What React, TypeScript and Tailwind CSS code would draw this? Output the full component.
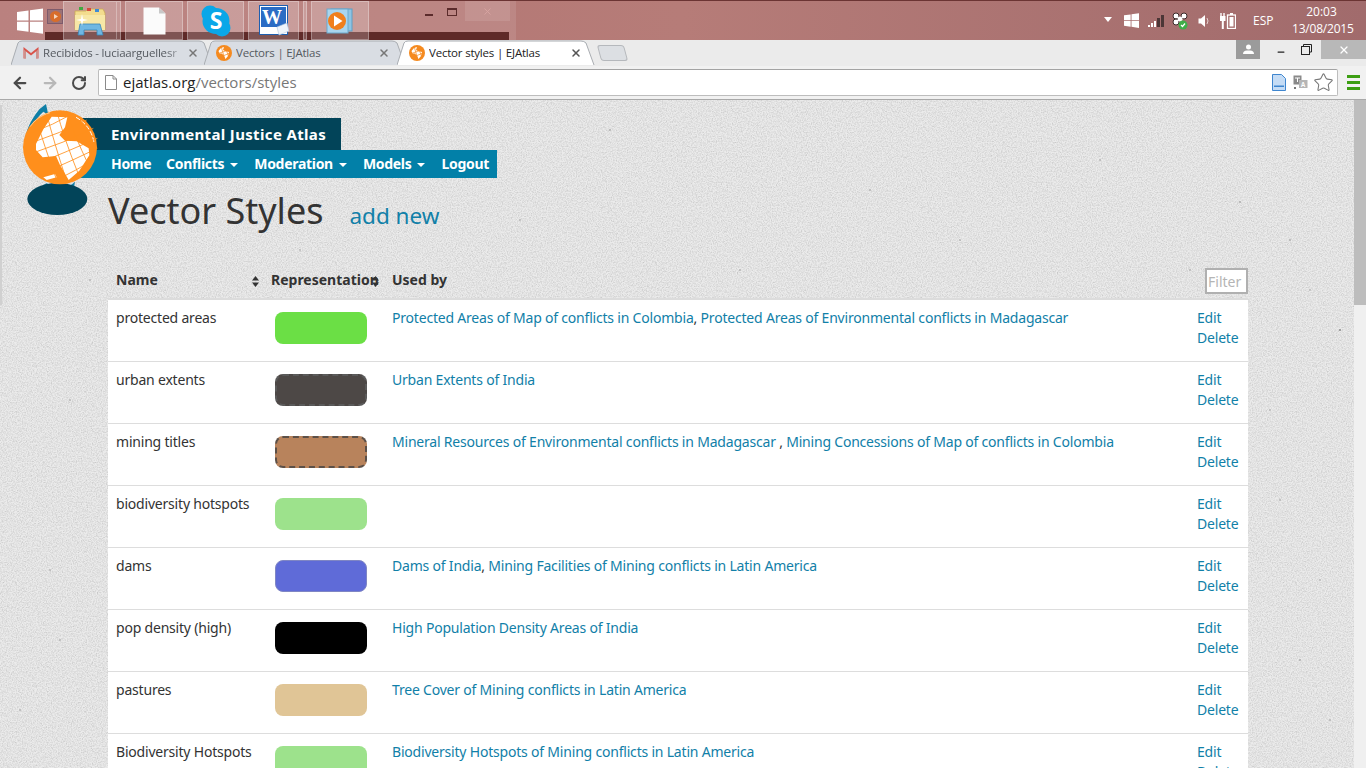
import React from 'react';
import { ArrowLeft, ArrowRight, RotateCw, Star, X, Minus } from 'lucide-react';

const rows = [
  { name: 'protected areas', swatch: 'bg-[#6bdf45]', links: ['Protected Areas of Map of conflicts in Colombia', ', ', 'Protected Areas of Environmental conflicts in Madagascar'] },
  { name: 'urban extents', swatch: 'bg-[#4d4846] border-2 border-dashed border-[#5a5a5a]', links: ['Urban Extents of India'] },
  { name: 'mining titles', swatch: 'bg-[#b8835c] border-2 border-dashed border-[#5c5048]', links: ['Mineral Resources of Environmental conflicts in Madagascar', ' , ', 'Mining Concessions of Map of conflicts in Colombia'] },
  { name: 'biodiversity hotspots', swatch: 'bg-[#9de28c]', links: [] },
  { name: 'dams', swatch: 'bg-[#5f6bd8] border border-[#7f86c4]', links: ['Dams of India', ', ', 'Mining Facilities of Mining conflicts in Latin America'] },
  { name: 'pop density (high)', swatch: 'bg-black', links: ['High Population Density Areas of India'] },
  { name: 'pastures', swatch: 'bg-[#e0c596]', links: ['Tree Cover of Mining conflicts in Latin America'] },
  { name: 'Biodiversity Hotspots', swatch: 'bg-[#9de28c]', links: ['Biodiversity Hotspots of Mining conflicts in Latin America'] },
];

const specks = [
  [160, 40, 0.8], [420, 70, 0.7], [610, 30, 0.8], [870, 90, 0.7], [1100, 60, 0.7], [1290, 140, 0.8], [1340, 230, 1], [1310, 190, 0.7],
  [300, 150, 0.7], [520, 120, 0.7], [740, 170, 0.7], [960, 140, 0.7], [1240, 102, 0.8], [70, 300, 0.7], [50, 470, 0.7], [1280, 400, 0.7],
  [1300, 560, 0.8], [1330, 620, 0.7], [20, 610, 0.7], [60, 540, 0.7], [1270, 310, 0.7], [90, 180, 0.7], [1190, 170, 0.7], [1320, 480, 0.7],
];

const WindowsLogo = ({ size = 26, color = 'white' }: { size?: number; color?: string }) => (
  <svg width={size} height={size} viewBox="0 0 26 26" fill={color}>
    <path d="M0 4 L11.5 2.4 V12.4 H0 Z M13 2.2 L26 0.4 V12.4 H13 Z M0 13.8 H11.5 V23.8 L0 22.2 Z M13 13.8 H26 V25.8 L13 24 Z" />
  </svg>
);

const MiniGlobe = () => (
  <svg width="16" height="16" viewBox="0 0 16 16" className="shrink-0">
    <circle cx="8" cy="8" r="8" fill="#f58a1f" />
    <path d="M2.5 6 L5 3 L8 2 L7 5 L9 6 L13 7 L12 11 L9.5 14 L8 11 L6 8.5 L3.5 8.5 Z" fill="white" />
    <path d="M1 9 L15 4 M2 13 L14 8 M5 1 L9 15 M9 1 L13 13" stroke="#f58a1f" strokeWidth="0.7" />
  </svg>
);

const GmailIcon = () => (
  <svg width="16" height="13" viewBox="0 0 16 13" className="shrink-0">
    <path d="M0.5 12.5 V1 L8 7 L15.5 1 V12.5 H13 V5.5 L8 9.5 L3 5.5 V12.5 Z" fill="#d9534a" />
    <path d="M3 12.5 V5.5 L1 3.5 V12.5 Z M13 12.5 V5.5 L15 3.5 V12.5 Z" fill="#c5c5c5" opacity="0.55" />
  </svg>
);

const FolderIcon = () => (
  <svg width="32" height="30" viewBox="0 0 32 30">
    <path d="M1 5 H12 L14 3 H29 L31 7 V24 H1 Z" fill="#f3dc8e" stroke="#c9aa56" strokeWidth="0.8" />
    <rect x="5" y="1" width="4" height="3" fill="#3faa3f" />
    <rect x="13" y="2" width="4" height="3" fill="#d6493c" />
    <rect x="21" y="3" width="4" height="3" fill="#3d8bd6" />
    <path d="M1 9 H31 V24 H1 Z" fill="#f7e7a6" />
    <path d="M6 18 H26 L29 29 H23 V24 H10 V29 H4 Z" fill="#6fb7e3" stroke="#3b85b8" strokeWidth="0.8" />
    <path d="M8 8 L9 13 L14 14 L9 15 L8 20 L7 15 L2 14 L7 13 Z" fill="white" />
  </svg>
);

const FileIcon = () => (
  <svg width="23" height="28" viewBox="0 0 23 28">
    <path d="M0.5 0.5 H16 L22.5 6.5 V27.5 H0.5 Z" fill="#fbfbfb" />
    <path d="M16 0.5 V6.5 H22.5 Z" fill="#c8c8c8" />
  </svg>
);

const SkypeIcon = () => (
  <svg width="30" height="32" viewBox="0 0 30 32">
    <circle cx="9" cy="9" r="8.5" fill="#0aa7e8" />
    <circle cx="21" cy="23" r="8.5" fill="#0aa7e8" />
    <ellipse cx="15" cy="16" rx="13.5" ry="13" fill="#0aa7e8" />
    <text x="15" y="24" textAnchor="middle" fontFamily="Open Sans" fontWeight="700" fontSize="23" fill="white">S</text>
  </svg>
);

const WordIcon = () => (
  <svg width="30" height="31" viewBox="0 0 30 31">
    <rect x="0.5" y="0.5" width="28" height="29" fill="#ffffff" stroke="#1e5fb0" />
    <rect x="2" y="2" width="25" height="20" fill="#2b6cc4" />
    <text x="13" y="19" textAnchor="middle" fontFamily="Liberation Serif" fontWeight="700" fontSize="20" fill="white">W</text>
    <path d="M18 22 L28 18 L30 26 L20 30 Z" fill="#eef4fb" stroke="#aec4de" strokeWidth="0.6" />
  </svg>
);

const MediaIcon = () => (
  <svg width="28" height="26" viewBox="0 0 28 26">
    <rect x="5" y="1" width="21" height="22" fill="#8fc4e3" stroke="#5d9fc6" />
    <rect x="1" y="1" width="21" height="24" fill="#a9d5ee" stroke="#6aa9cd" />
    <circle cx="11" cy="13" r="9" fill="#f07f1c" />
    <path d="M8 7.5 L16.5 13 L8 18.5 Z" fill="white" />
  </svg>
);

const TaskButton = ({ className, children }: { className: string; children?: React.ReactNode }) => (
  <div className={`h-[39px] border border-white/30 bg-white/20 flex items-center justify-center shrink-0 ${className}`}>
    {children}
  </div>
);

const Taskbar = () => (
  <div className="relative h-10 shrink-0 flex items-center bg-gradient-to-r from-[#b27371] via-[#b67c78] to-[#a16b6c] border-t border-[#6b3433]">
    <div className="absolute left-0 top-0 h-full w-[516px] bg-white/10" />
    <div className="absolute left-[45px] top-[31px] h-[9px] w-[464px] bg-[#5f2a28]" />
    <div className="relative flex items-center h-full w-full">
      <div className="ml-[17px] w-[30px] shrink-0">
        <WindowsLogo />
      </div>
      <div className="w-[16px] h-[15px] -mt-2 border border-[#7d5b6c] bg-[#9c7276] flex items-center justify-center shrink-0">
        <svg width="11" height="11" viewBox="0 0 11 11">
          <circle cx="5.5" cy="5.5" r="5.5" fill="#d86d2a" />
          <path d="M4 3 L8 5.5 L4 8 Z" fill="#f3d5bd" />
        </svg>
      </div>
      <TaskButton className="w-[54px]">
        <FolderIcon />
      </TaskButton>
      <TaskButton className="w-[4px] border-l-0" />
      <div className="w-[4px]" />
      <TaskButton className="w-[58px]">
        <FileIcon />
      </TaskButton>
      <div className="w-[4px]" />
      <TaskButton className="w-[57px]">
        <SkypeIcon />
      </TaskButton>
      <div className="w-[4px]" />
      <TaskButton className="w-[51px]">
        <WordIcon />
      </TaskButton>
      <div className="w-[4px]" />
      <TaskButton className="w-[4px]" />
      <div className="w-[4px]" />
      <TaskButton className="w-[58px]">
        <MediaIcon />
      </TaskButton>
      <div className="ml-[56px] self-start mt-[13px] w-[8px] h-[2px] bg-[#5b2b2b] shrink-0" />
      <div className="ml-[14px] self-start mt-[7px] w-[10px] h-[8px] border border-[#5b2b2b] border-t-2 shrink-0" />
      <div className="ml-[8px] self-start h-[20px] w-[45px] bg-white/10 flex items-center justify-center shrink-0">
        <X size={11} className="text-[#d8a4a2]" />
      </div>
      <div className="ml-auto flex items-center h-full text-white [font-family:'Open_Sans',sans-serif]">
        <div className="mt-[-2px] w-0 h-0 border-l-[4px] border-r-[4px] border-t-[5px] border-l-transparent border-r-transparent border-t-white" />
        <div className="ml-[12px]">
          <WindowsLogo size={15} />
        </div>
        <svg className="ml-[9px]" width="16" height="14" viewBox="0 0 16 14" fill="#4c3636">
          <rect x="0" y="11" width="2" height="2" fill="white" />
          <rect x="3" y="9" width="2" height="4" fill="white" />
          <rect x="6" y="7" width="2" height="6" fill="white" />
          <rect x="9" y="4" width="3" height="9" />
          <rect x="13" y="1" width="3" height="12" />
        </svg>
        <svg className="ml-[8px]" width="16" height="18" viewBox="0 0 16 18">
          <circle cx="4" cy="4" r="3" fill="white" stroke="#3b2a2a" />
          <circle cx="12" cy="4" r="3" fill="white" stroke="#3b2a2a" />
          <circle cx="4" cy="10" r="3" fill="white" stroke="#3b2a2a" />
          <circle cx="8" cy="7" r="2.5" fill="white" />
          <circle cx="11" cy="13" r="4.5" fill="#3fae49" />
          <path d="M9 13 L10.5 14.5 L13 11.5" stroke="white" strokeWidth="1.2" fill="none" />
        </svg>
        <svg className="ml-[10px]" width="12" height="14" viewBox="0 0 12 14">
          <path d="M0.5 4.5 H3 L7 1 V13 L3 9.5 H0.5 Z" fill="white" />
          <path d="M9 4 Q11 7 9 10" stroke="#e7d2d2" fill="none" />
        </svg>
        <svg className="ml-[10px]" width="16" height="16" viewBox="0 0 16 16">
          <path d="M1 0 V3 M4 0 V3" stroke="white" strokeWidth="1.4" />
          <rect x="0" y="3" width="5.5" height="5" fill="white" />
          <rect x="1.8" y="8" width="2" height="8" fill="white" />
          <rect x="7.5" y="2" width="8" height="13.5" fill="none" stroke="white" strokeWidth="1.3" />
          <rect x="10" y="0" width="3" height="2" fill="white" />
          <rect x="9.5" y="4" width="4" height="9.5" fill="white" />
        </svg>
        <span className="ml-[17px] text-[12px] w-[20px]">ESP</span>
        <div className="ml-[19px] mr-[15px] w-[59px] text-center text-[12px] leading-[17px] -mt-[1px]">
          <div>20:03</div>
          <div className="tracking-[-0.2px]">13/08/2015</div>
        </div>
      </div>
    </div>
  </div>
);

const Tab = ({ title, icon, active, width, closeGap, fade }: { title: string; icon: React.ReactNode; active?: boolean; width: number; closeGap: number; fade?: boolean }) => (
  <div className="relative h-[26px] shrink-0" style={{ width }}>
    <svg className="absolute inset-0" width={width} height={26} viewBox={`0 0 ${width} 26`}>
      <path
        d={`M0 25 L7 3 Q8 1 11 1 H${width - 14} Q${width - 11} 1 ${width - 9} 3 L${width - 1} 25`}
        fill={active ? '#ffffff' : '#d9dde3'}
        stroke="#a9adb2"
      />
    </svg>
    <div className="relative flex items-center h-full pl-[12px] pb-[1px]" style={{ paddingRight: closeGap }}>
      {icon}
      <span
        className={`ml-[4px] flex-1 overflow-hidden whitespace-nowrap text-[11.5px] tracking-[-0.2px] ${active ? 'text-[#222222]' : 'text-[#555a60]'} ${fade ? '[mask-image:linear-gradient(to_right,black_85%,transparent)]' : ''}`}
      >
        {title}
      </span>
      <X size={12} strokeWidth={3} className={active ? 'text-[#555555]' : 'text-[#777777]'} />
    </div>
  </div>
);

const BrowserChrome = () => (
  <div className="shrink-0 bg-[#ededed] border-b border-[#a9a9a9] [font-family:'Open_Sans',sans-serif]">
    <div className="relative h-[26px] flex items-start pl-[11px] bg-[#ebebeb]">
      <div className="flex">
        <Tab title="Recibidos - luciaarguellesr" icon={<GmailIcon />} width={202} closeGap={14} fade />
        <div className="-ml-[9px]">
          <Tab title="Vectors | EJAtlas" icon={<MiniGlobe />} width={202} closeGap={16} />
        </div>
        <div className="-ml-[9px]">
          <Tab title="Vector styles | EJAtlas" icon={<MiniGlobe />} active width={198} closeGap={13} />
        </div>
      </div>
      <div className="mt-[5px] ml-[4px] w-[27px] h-[16px] rounded-[3px] skew-x-[15deg] border border-[#b5b8bc] bg-[#dcdfe3]" />
      <div className="ml-auto flex items-start h-[19px]">
        <div className="w-[24px] h-[19px] bg-[#9b9b9b] flex items-center justify-center">
          <svg width="11" height="11" viewBox="0 0 11 11" fill="white">
            <circle cx="5.5" cy="3" r="2.5" />
            <path d="M0 10 Q0 6.5 4 6.5 H7 Q11 6.5 11 10 Z" />
          </svg>
        </div>
        <div className="w-[16px]" />
        <Minus size={10} strokeWidth={3} className="mt-[7px] text-[#222222]" />
        <div className="w-[15px]" />
        <svg className="mt-[4px]" width="11" height="11" viewBox="0 0 11 11" fill="none" stroke="#222222">
          <rect x="0.5" y="2.5" width="8" height="8" />
          <path d="M2.5 2.5 V0.5 H10.5 V8 H8.5" />
        </svg>
        <div className="w-[9px]" />
        <div className="w-[45px] h-[19px] bg-[#b8b8b8] flex items-center justify-center">
          <X size={12} strokeWidth={2.5} className="text-white" />
        </div>
      </div>
    </div>
    <div className="h-[33px] flex items-center bg-[#f1f1f1]">
      <ArrowLeft size={18} strokeWidth={3} className="ml-[11px] text-[#4a4a4a]" />
      <ArrowRight size={18} strokeWidth={3} className="ml-[12px] text-[#b8b8b8]" />
      <RotateCw size={16} strokeWidth={3} className="ml-[12px] text-[#4a4a4a]" />
      <div className="ml-[11px] w-[1240px] h-[27px] bg-white border border-[#bdbdbd] border-t-[#a3a3a3] rounded-[2px] flex items-center">
        <svg className="ml-[6px]" width="12" height="15" viewBox="0 0 12 15" fill="none" stroke="#8a8a8a">
          <path d="M0.5 0.5 H8 L11.5 4 V14.5 H0.5 Z M8 0.5 V4 H11.5" />
        </svg>
        <span className="ml-[6px] text-[15px] text-[#222222]">
          ejatlas.org<span className="text-[#777777]">/vectors/styles</span>
        </span>
        <svg className="ml-auto" width="14" height="17" viewBox="0 0 14 17">
          <path d="M0.5 0.5 H9.5 L13.5 4.5 V16.5 H0.5 Z" fill="#c5dcf5" stroke="#3f86cf" />
          <rect x="2" y="11.5" width="10" height="1.5" fill="#3f86cf" />
        </svg>
        <svg className="ml-[7px]" width="15" height="15" viewBox="0 0 15 15">
          <rect x="0.5" y="0.5" width="8" height="9" fill="#8a8a8a" />
          <rect x="6" y="5" width="8.5" height="8" fill="#b5b5b5" />
          <text x="10.2" y="12" textAnchor="middle" fontSize="6.5" fontFamily="Liberation Sans" fontWeight="700" fill="white">A</text>
          <path d="M2 3 H7 M4.5 3 V7" stroke="white" />
          <path d="M1 12 L3 14 M3 12 L1 14" stroke="#777777" />
        </svg>
        <Star size={21} strokeWidth={1.2} className="ml-[5px] mr-[3px] text-[#777777]" />
      </div>
      <div className="ml-[9px] w-[13px] flex flex-col gap-[3px]">
        <div className="h-[3px] bg-[#3c9e12]" />
        <div className="h-[3px] bg-[#3c9e12]" />
        <div className="h-[3px] bg-[#3c9e12]" />
      </div>
    </div>
  </div>
);

const Globe = () => (
  <svg className="absolute left-[22px] top-[3px]" width="80" height="114" viewBox="36 9 240 342">
    <path d="M108 12 L115 45 L100 35 Q55 75 45 150 Q38 90 88 28 Z" fill="#0f7fa6" />
    <path d="M110 250 Q160 280 195 245 L190 272 Q140 285 100 255 Z" fill="#0f7fa6" />
    <ellipse cx="142" cy="297" rx="90" ry="48" fill="#024459" />
    <circle cx="150" cy="142" r="111" fill="#ff8f1c" />
    <path d="M60 80 A108 108 0 0 1 120 38" stroke="#ffffff" strokeWidth="1.5" fill="none" />
    <path d="M198 52 A104 104 0 0 1 252 128" stroke="#ffffff" strokeWidth="3" strokeDasharray="14 6" fill="none" />
    <path d="M100 232 L135 222 L140 232 L110 240 Z" fill="#ffffff" />
    <path
      d="M78 132 L100 88 L125 50 L172 52 L165 82 L148 105 L165 122 L200 124 L236 145 L238 166 L208 212 L176 240 L150 195 L138 168 L98 172 L78 150 Z"
      fill="#ffffff"
    />
    <g stroke="#ff8f1c" strokeWidth="2.5" fill="none">
      <path d="M60 100 Q130 75 190 40" />
      <path d="M60 130 Q150 100 230 60" />
      <path d="M66 160 Q160 130 250 85" />
      <path d="M85 190 Q170 155 262 115" />
      <path d="M110 215 Q190 180 262 145" />
      <path d="M140 240 Q200 210 250 180" />
      <path d="M80 60 Q100 130 140 240" />
      <path d="M110 42 Q130 120 172 250" />
      <path d="M140 32 Q160 110 208 230" />
      <path d="M170 35 Q190 100 238 200" />
    </g>
  </svg>
);

const Texture = () => (
  <svg className="absolute inset-0 h-full w-full" aria-hidden="true">
    <filter id="paper">
      <feTurbulence type="fractalNoise" baseFrequency="0.8" numOctaves="3" seed="4" />
      <feColorMatrix type="matrix" values="0 0 0 0 0.5  0 0 0 0 0.5  0 0 0 0 0.5  0.9 0.9 0 0 -0.72" />
    </filter>
    <rect width="100%" height="100%" filter="url(#paper)" />
    {specks.map(([x, y, r], i) => (
      <circle key={i} cx={x} cy={y} r={r} fill="#8a8a8a" />
    ))}
  </svg>
);

const SortIcon = () => (
  <svg width="7" height="11" viewBox="0 0 7 11" fill="#333333" className="block">
    <path d="M3.5 0 L7 4.5 H0 Z M0 6.5 H7 L3.5 11 Z" />
  </svg>
);

const Caret = () => (
  <span className="mt-[2px] border-l-[4px] border-r-[4px] border-t-[4px] border-l-transparent border-r-transparent border-t-white" />
);

export default function App() {
  return (
    <div className="h-[768px] w-[1366px] overflow-hidden flex flex-col [font-family:'Open_Sans',sans-serif]">
      <Taskbar />
      <BrowserChrome />
      <div className="relative flex-1 flex min-h-0 bg-[#ebebeb]">
        <div className="relative flex-1 overflow-hidden text-[#333333] [font-family:'Noto_Sans',sans-serif]">
          <Texture />
          <div className="absolute left-0 top-[5px] w-[2px] h-[200px] bg-[#d0d0d0]" />
          <div className="relative pt-[18px]">
            <div className="ml-[80px] w-[261px] h-[32px] bg-[#024459] pl-[31px] flex items-center text-white font-bold text-[15px] tracking-[0.35px]">
              Environmental Justice Atlas
            </div>
            <div className="ml-[80px] w-[417px] h-[28px] pb-[1px] bg-[#0280a8] pl-[31px] flex items-center gap-[16px] text-white font-bold text-[14px] tracking-[-0.3px]">
              <span className="w-[39px] whitespace-nowrap">Home</span>
              <span className="flex items-center gap-[6px]">Conflicts <Caret /></span>
              <span className="flex items-center gap-[6px]">Moderation <Caret /></span>
              <span className="flex items-center gap-[6px]">Models <Caret /></span>
              <span>Logout</span>
            </div>
            <div className="ml-[108px] mt-[8px] flex items-baseline h-[50px] leading-[50px]">
              <h1 className="text-[36px] text-[#333333]">Vector Styles</h1>
              <a className="ml-[26px] text-[22.5px] text-[#1180a8]">add new</a>
            </div>
            <div className="ml-[108px] mt-[34px] w-[1140px]">
              <div className="h-[30px] flex items-start border-b-2 border-[#dcdcdc] font-bold text-[14px] leading-[20px] relative">
                <div className="w-[159px] pl-[8px] flex items-center justify-between pr-[8px]">
                  <span>Name</span>
                  <span className="mt-[3px]"><SortIcon /></span>
                </div>
                <div className="w-[125px] pl-[4px] relative whitespace-nowrap">
                  Representation
                  <span className="absolute left-[105px] top-[6px]"><SortIcon /></span>
                </div>
                <div>Used by</div>
                <input
                  placeholder="Filter"
                  className="ml-auto -mt-[2px] w-[43px] h-[26px] bg-white border-2 border-[#b0b0b0] pl-[1px] text-[14px] font-normal placeholder:text-[#b5b5b5] outline-none"
                />
              </div>
              <div className="bg-white">
                {rows.map((row, i) => (
                  <div key={i} className="h-[62px] flex border-b border-[#dddddd] text-[14px] leading-[20px] tracking-[-0.2px]">
                    <div className="w-[159px] pl-[8px] pt-[8px]">{row.name}</div>
                    <div className="w-[125px] pl-[8px] pt-[12px]">
                      <div className={`w-[92px] h-[32px] rounded-lg ${row.swatch}`} />
                    </div>
                    <div className="flex-1 pt-[8px]">
                      {row.links.map((l, j) =>
                        j % 2 === 1 ? (
                          <span key={j}>{l}</span>
                        ) : (
                          <a key={j} className="text-[#1180a8]">{l}</a>
                        ),
                      )}
                    </div>
                    <div className="w-[51px] pt-[8px] text-[#1180a8]">
                      <div>Edit</div>
                      <div>Delete</div>
                    </div>
                  </div>
                ))}
              </div>
            </div>
          </div>
          <Globe />
        </div>
        <div className="w-[12px] shrink-0 bg-[#f0f0f0]">
          <div className="h-[205px] bg-[#bdbdbd]" />
        </div>
      </div>
    </div>
  );
}
